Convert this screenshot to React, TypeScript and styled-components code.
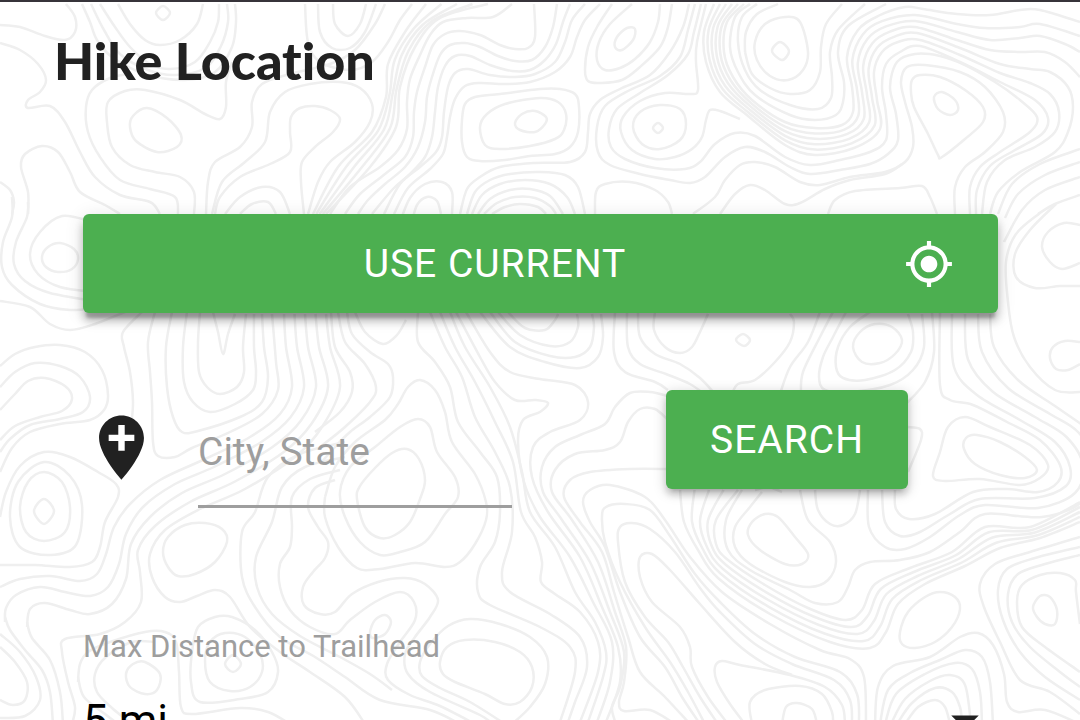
import React from "react";
import styled, { createGlobalStyle } from "styled-components";
import { MdAddLocation, MdGpsFixed } from "react-icons/md";

/* ---------- topographic backdrop ---------- */

type Point = [number, number];

const parse = (line: string): Point[] =>
  line.split(" ").map((pair) => pair.split(",").map(Number) as Point);

// Runs a smooth curve through the points of a contour.
const smooth = (pts: Point[], closed: boolean): string => {
  const n = pts.length;
  const at = (i: number): Point =>
    closed ? pts[(i + n) % n] : pts[Math.max(0, Math.min(n - 1, i))];
  let d = `M${pts[0][0]} ${pts[0][1]}`;
  const segments = closed ? n : n - 1;
  for (let i = 0; i < segments; i++) {
    const [p0, p1, p2, p3] = [at(i - 1), at(i), at(i + 1), at(i + 2)];
    const c1 = [p1[0] + (p2[0] - p0[0]) / 6, p1[1] + (p2[1] - p0[1]) / 6];
    const c2 = [p2[0] - (p3[0] - p1[0]) / 6, p2[1] - (p3[1] - p1[1]) / 6];
    d += `C${[...c1, ...c2, ...p2].map((v) => v.toFixed(1)).join(" ")}`;
  }
  return closed ? d + "Z" : d;
};

// Evenly spaced contours between two that have the same number of points,
// each one carried on by its own tail where tails are given.
const band = (from: string, to: string, count: number, tails: string[] = []): string[] => {
  const a = parse(from);
  const b = parse(to);
  return Array.from({ length: count }, (_, k) => {
    const t = k / (count - 1);
    const pts = a.map(
      (p, i) => [p[0] + (b[i][0] - p[0]) * t, p[1] + (b[i][1] - p[1]) * t] as Point
    );
    return smooth(tails[k] ? [...pts, ...parse(tails[k])] : pts, false);
  });
};

const OPEN = [
  "0,23 20,25 45,34 65,38 75,30 75,15 66,2",
  "0,41 20,48 38,62 46,78 40,90 28,98 28,106 50,104 65,120 80,150 95,175 120,193 150,200 160,212",
  "28,212 28,190 21,165 25,152 42,144 58,150 70,170 80,190 105,203 120,212",
  "82,2 90,20 97,38 112,55 145,72 185,78 215,70 232,45 236,20 235,2",
  "100,2 115,25 130,45 150,62 170,67 195,60 210,40 218,20 219,2",
  "91,2 104,28 120,52 148,68 175,73 205,66 221,44 228,20 227,2",
  "118,2 130,22 145,38 160,43 180,38 197,22 203,2",
  "178,212 175,195 150,187 120,178 100,155 88,130 86,105 92,88 110,76 130,72",
  "194,212 194,190 180,175 155,170 130,163 112,145 107,120 108,100 125,89 145,88 180,98 205,112 220,117 226,105 226,80 232,60",
  "206,212 208,180 215,160 240,145 252,125 252,100 262,82 290,72 330,62 355,48 375,22 385,2",
  "212,212 222,180 245,160 265,140 270,110 285,90 310,82 340,80 360,86 372,102 370,120 355,140 330,160 318,180 308,212",
  "304,212 301,180 302,160 315,145 333,130 340,117 330,108 315,104 300,106 291,115 290,130 290,150 270,162 240,175 220,195 215,212",
  "225,212 240,195 262,185 280,190 290,212",
  "240,212 252,202 268,200 276,212",
  "305,2 308,40 320,60 350,68 372,60 388,40 400,18 412,2",
  "318,2 320,30 332,46 350,46 365,30 376,2",
  "333,2 335,22 348,34 360,22 366,2",
  "512,2 493,15 467,16 443,20 430,33 420,53 410,77 407,100 407,127 398,148 380,165 350,185 330,212",
  "534,2 535,35 528,46 515,47 500,43 480,33 460,29 445,32 433,43 425,65 417,90 414,110 413,135 405,155 385,172 360,192 345,212",
  "557,2 553,25 545,45 532,58 515,59 498,54 480,45 465,41 450,43 440,53 432,75 427,95 425,120 418,145 405,165 385,182 368,198 358,212",
  "570,2 563,20 556,42 545,58 530,68 512,69 490,63 470,54 455,54 445,64 438,85 435,110 432,135 425,155 410,172 393,187 372,212",
  "585,2 572,18 565,40 555,60 535,72 515,75 490,73 468,67 455,71 448,85 444,110 442,135 436,150 420,165 400,182 384,212",
  "600,2 585,18 577,35 570,55 555,70 530,80 505,82 480,81 465,84 455,97 450,115 447,135 443,152 430,167 408,186 394,212",
  "460,212 467,187 480,175 500,165 535,161 570,160 585,150 588,130 590,112 600,98 620,87 650,73 670,50 683,25 689,2",
  "467,212 475,190 490,178 510,172 540,170 565,173 578,185 585,212",
  "472,212 482,193 500,182 525,178 550,182 567,195 575,212",
  "478,212 490,197 510,188 530,187 550,194 563,212",
  "484,212 497,201 515,195 535,196 550,204 556,212",
  "492,212 505,205 520,202 538,205 546,212",
  "400,220 410,196 425,182 442,180 452,190 452,212",
  "412,220 417,203 427,195 437,199 441,212",
  "660,2 658,20 650,40 635,57 620,66 605,68 597,58 599,40 610,22 632,2",
  "672,2 668,25 660,45 640,65 622,78 600,81 588,79 585,68 588,45 597,25 612,2",
  "695,2 688,28 680,55 660,74 630,88 605,104 597,125 598,150 610,163 640,172 670,178 690,181 705,175 725,155 745,145 765,150 790,165 810,172 840,168 870,162 888,152 898,138 896,112 890,85 897,60 915,52 940,54 965,63 995,80 1020,98 1037,115 1030,130 1000,150 980,165 970,185 970,212",
  "701,2 694,30 688,52 668,73 640,91 617,107 609,127 611,145 625,157 655,166 685,167 700,160 715,142 735,131 755,134 785,155 810,163 840,158 870,150 886,138 886,112 882,85 886,62 900,50 920,44 960,60 1000,80 1035,98 1048,116 1042,132 1015,148 990,164 977,188 976,212",
  "706,2 697,40 696,60 698,88 690,92 665,91 640,99 623,115 621,130 632,148 655,157 675,155 692,147 702,135 706,118 710,108 720,109 740,117",
  "595,212 596,190 605,182 630,180 655,188 668,200 672,212",
  "693,212 715,195 725,178 740,163 755,160 775,165 800,180 820,183 850,175 885,170 905,160 913,145 912,125 905,100 901,80 907,65 925,63 960,70 985,85 1003,110 1003,130 985,150 965,165 955,185 955,212",
  "720,212 735,192 750,183 765,188 785,202 800,201 825,187 850,178 885,172 902,162",
  "745,50 752,72 770,86 790,92 810,88 820,70 821,45 826,22 842,2",
  "745,50 746,30 757,12 778,2",
  "757,2 742,15 738,40 745,68 760,88 790,103 818,107 831,96 832,75 830,50 838,28 865,2",
  "750,2 735,15 730,45 738,70 755,93 790,113 815,118 836,113 843,100 844,80 838,50 848,24 886,2",
  "828,212 835,198 855,189 900,186 922,184 930,195 937,212",
  "1080,147 1040,162 1012,182 998,212",
  "1080,160 1045,173 1018,192 1005,216",
  "1080,175 1045,188 1022,208 1004,240",
  "1080,193 1055,202 1038,212",
  // either side of the first button
  "12,195 12,215 3,240 2,265 12,283 40,302 70,308 95,306",
  "28,200 27,215 16,240 14,262 25,279 50,291 95,299",
  "90,219 62,214 40,230 30,252 38,272 60,285 95,290",
  "0,180 10,188 14,200 12,212",
  "0,299 30,305 50,322 70,328 95,322 125,310",
  "1056,202 1030,228 1015,252 1016,275 1035,286 1060,284 1080,284",
  "1040,211 1016,232 1006,260 1008,300 1014,335 1030,365 1055,388 1080,390",
  "1080,223 1064,221 1048,230 1042,245 1050,260 1062,267 1080,261",
  // below the first button
  "0,364 15,352 35,345 60,343 85,350 102,368 108,393 104,408 90,418 60,422 30,430 12,446 0,470",
  "0,385 15,370 35,361 60,364 80,375 90,395 83,410 60,417 30,423 10,437 0,450",
  "0,408 15,392 28,379 45,376 65,384 72,397 62,409 40,415 15,424 0,438",
  "142,310 123,330 124,345 130,370 133,400 131,425",
  "155,310 148,340 150,370 152,400 153,440 158,454 175,455 192,446 230,430 262,412 278,388 276,360 272,312",
  "172,310 166,345 167,385 173,415 182,430 198,429 240,415 262,400 268,375 264,345 262,312",
  "187,310 183,345 184,380 193,400 210,410 235,402 253,388 256,370 254,345 254,312",
  "200,310 198,340 199,370 207,385 220,392 237,385 244,370 243,345 246,312",
  "213,310 218,330 223,352 228,332 235,312",
  "355,310 365,330 383,342 397,333 406,318",
  "347,310 352,332 370,350 388,362 393,375 390,395 370,415 350,430 335,445 320,462",
  "338,310 345,340 365,362 376,385 370,400 345,425 320,445",
  "331,310 335,345 350,370 352,390 340,410 315,430",
  "418,310 418,340 435,360 450,385 458,420 480,450 497,475 500,510 495,540 480,565 478,590 490,603 540,625 570,645 575,670 560,720",
  "430,310 445,345 462,375 475,415 495,450 510,485 512,530 502,570 510,590 550,612 580,635 587,665 575,700 568,720",
  "440,310 455,345 475,380 495,420 513,460 521,510 535,535 542,560 541,580 555,592 580,610 598,640 598,670 580,720",
  "450,310 465,345 490,385 510,425 522,470 530,510 555,545 575,590 595,620 606,650 603,675 588,720",
  "456,310 480,355 495,380 515,398 535,398 548,401 540,410 523,418 518,440 524,480 540,515 570,555 593,600 612,640 610,680 597,720",
  "466,310 490,350 510,370 540,377 575,383 588,400 580,418 550,430 533,445 532,475 548,510 580,555 602,605 618,645 620,680 606,720",
  "668,394 650,390 630,391 615,405 605,422 580,433 555,445 542,465 543,490 562,518 590,560 610,610 624,650 620,685 612,705 616,722",
  "668,418 655,407 640,407 628,420 620,440 605,448 575,452 555,468 552,490 572,518 598,560 615,610 626,645 624,680 619,700 624,709 650,708 675,722",
  "668,467 630,467 590,470 570,478 564,495 580,520 602,550 614,590 628,635 640,670 665,695 690,722",
  "480,310 510,345 545,360 580,366 598,355 603,335 601,312",
  "490,310 515,340 550,354 575,355 590,345 594,325 592,312",
  "498,310 520,333 550,344 570,340 578,325 577,312",
  "508,310 525,326 545,328 555,318 558,312",
  "615,310 614,350 625,370 655,380 668,388",
  "627,310 628,345 640,362 666,372 690,382 704,392",
  "638,310 640,335 655,352 680,362 700,376 715,392",
  "655,310 654,328 665,345 680,351 692,345 700,330 708,312",
  "870,310 850,325 838,345 836,365 843,376 865,378 895,368 911,350 913,330 908,312",
  "846,310 833,335 823,355 819,375 825,388 850,390 890,383 913,368 924,345 922,312",
  "833,310 820,335 803,370 801,392",
  "820,310 808,340 790,365 780,392",
  "932,310 934,350 925,380 906,402",
  "732,392 738,382 755,378 775,360 790,340 794,320 790,312",
  "940,310 940,383 950,398 973,403 1007,420 1040,438 1060,463 1058,480 1038,490 1007,487 973,490 935,512 909,517 896,507 895,488",
  "1080,340 1065,339 1053,345 1050,356 1056,367 1068,368 1080,362",
  "908,425 920,427 921,438 908,470",
  // lower half
  "0,563 35,563 70,565 92,560 100,545 105,520 118,495 116,482 98,470 70,455 44,450 20,464 6,490 0,515",
  "5,615 10,628 25,648 42,668 50,690 53,722",
  "27,620 32,636 50,658 60,690 63,722",
  "0,632 20,650 36,675 40,698 25,714 0,716",
  "0,645 15,660 27,680 25,698 13,703 0,698",
  "345,440 300,452 268,475 255,510 242,530 242,575 255,605 280,635 315,655 345,675 380,698 430,708 460,722",
  "345,455 305,465 282,485 272,520 256,555 257,585 272,612 300,634 340,655 370,672 392,688",
  "340,468 310,477 292,495 292,525 290,545 280,562 280,585 290,608 310,625 335,632 350,618 375,600 400,590 414,600 415,618 400,640 387,662 388,678 410,693 440,704 475,722",
  "335,478 315,486 308,505 318,525 328,540 325,556 313,570 303,585 304,603 320,612 335,610 352,592 378,580 405,576 425,582 438,598 430,615 415,635 405,652 408,672 430,690 480,713 492,722",
  "325,495 325,515 338,545 357,566 380,567 415,561 445,565 460,560 475,542 486,518 486,500 475,472 452,440 445,410 435,388 420,378 408,385 398,402 385,418 355,440 335,465 325,495",
  "78,680 80,662 88,650 110,640 145,630 165,630 176,640 179,670 181,705 192,712 240,706 268,710 290,722",
  "78,675 84,695 105,712 118,722",
  "132,722 112,706 97,690 95,672 106,655 132,640 155,640",
  "512,722 530,705 545,682 547,655 530,635 500,622 470,617 448,624 430,642 420,660 422,674 440,686 470,700 505,722",
  "866,722 864,675 850,657 820,648 770,622 722,590 690,555 665,518 645,495 610,483 590,488 583,500 590,520 605,545 620,590 640,635 665,665 682,695 700,722",
  "859,722 857,692 840,670 795,655 755,632 720,600 695,572 670,534 650,508 625,502 606,505 602,515 605,540 620,580 645,625 670,660 688,690 705,722",
  "852,722 850,698 834,678 792,662 755,642 720,610 700,586 675,550 650,527 632,521 620,525 618,540 625,580 645,615 668,640 683,665 700,695 718,722",
  "845,722 842,703 825,685 790,673 740,663 722,659 715,665 717,680 730,702 745,722",
  "792,673 765,662 735,640 700,602 670,568 652,552 640,555 640,575 652,600 680,625 690,645 692,665 708,695 728,722",
  "800,488 808,518 830,540 836,560 828,578 810,585 785,580 750,562 735,545 735,525 750,505 762,490",
  "815,488 818,508 830,522 843,523 855,512 860,488",
  "755,488 768,485 782,490",
  "752,722 750,700 765,688 800,684 822,692 832,710 833,722",
  "782,722 786,705 797,701 812,707 817,722",
  "875,722 878,685 893,664 930,655 960,635 978,631 993,643 1004,672 1007,700 1018,710 1045,708 1080,722",
  "880,722 888,688 910,671 940,658 965,648 982,655 990,680 993,722",
  "885,722 896,692 925,672 955,661 972,667 980,690 982,722",
  "891,722 905,697 930,679 950,673 965,683 971,722",
  "897,722 912,701 935,686 952,690 960,705 962,722",
  "905,722 918,705 935,698 945,705 950,722",
  "1080,535 1030,550 995,562 980,582 984,605 1000,640 1020,678 1050,690 1080,712",
  "1080,545 1035,556 1007,567 998,588 1003,618 1020,650 1045,675 1080,698",
  "1080,553 1045,562 1018,572 1008,592 1012,620 1030,645 1060,670 1080,685",
  "1080,622 1076,590 1075,578 1060,571 1040,573 1022,583 1017,600 1022,625 1045,645 1080,670",
];

const CLOSED = [
  "163,4 170,11 163,18 156,11",
  "147,106 133,114 130,125 136,139 157,150 177,145 181,133 167,116",
  "480,125 487,112 505,102 540,96 558,100 566,112 564,128 555,137 530,144 500,147 485,143",
  "462,118 465,102 475,95 500,92 540,87 560,87 575,92 579,105 578,130 570,145 555,152 530,154 505,158 480,159 467,155 462,140",
  "515,121 522,112 535,109 546,115 545,122 535,130 520,128",
  "615,45 617,35 627,26 635,27 633,38 622,48",
  "633,125 640,110 660,103 680,107 686,122 680,138 660,147 642,142",
  "658,121 663,126 658,131 653,126",
  "780,40 789,49 782,58 772,49",
  "755,40 765,22 785,15 800,20 808,50 803,68 788,78 770,74 757,58",
  "912,78 920,73 940,75 965,88 983,105 983,120 965,137 942,155 938,153 928,132 914,105 911,90",
  "934,95 942,90 955,98 958,108 950,113 938,107",
  "60,241 74,247 78,257 72,267 58,270 46,265 42,255 48,245",
  "44,497 54,509 44,522 34,509",
  "44,470 62,480 70,505 65,530 44,539 26,530 20,505 28,480",
  "44,460 70,474 82,503 76,543 50,553 20,545 10,515 18,480",
  "163,550 168,535 185,523 205,521 222,527 227,540 215,560 195,572 178,574 168,565",
  "233,653 241,662 233,670 225,662",
  "205,658 210,640 225,631 245,635 260,652 262,670 250,685 230,689 210,680",
  "192,650 198,625 215,615 232,615 255,628 272,650 278,670 268,690 240,697 200,700 191,680",
  "145,660 160,672 157,688 145,692 130,685 126,672 133,662",
  "357,497 360,484 375,466 392,451 407,447 419,457 425,478 420,497 410,520 395,533 380,536 365,525",
  "340,490 350,465 375,445 400,425 418,417 430,425 437,450 455,475 458,495 445,512 425,540 400,550 380,553 360,540 345,515",
  "440,660 447,645 465,638 495,640 520,650 532,665 532,685 520,700 505,702 485,692 455,680 443,672",
  "370,630 375,618 385,613 391,620 385,632 373,636",
  "743,332 750,338 744,344 736,338",
  "853,345 860,330 875,322 892,325 902,338 895,352 880,361 862,360",
  "933,474 940,450 948,425 965,415 990,425 1030,443 1048,463 1040,476 1020,483 980,477 945,479",
  "964,447 966,436 977,433 1000,440 1025,455 1037,468 1025,476 1000,473 975,462",
  "748,533 752,520 765,512 778,515 795,535 808,552 802,562 785,562 760,548",
  "900,630 908,610 925,595 940,590 955,595 960,607 952,625 935,640 915,646 902,642",
  "1033,605 1040,594 1050,595 1057,608 1055,622 1045,622 1037,615",
];

// Contours of the north-east slope, from the edge of the valley outward.
const RIDGE_TAILS = [
  "905,5 923,7 957,12 990,13 1020,8 1040,8 1080,20",
  "915,13 957,22 985,26 1020,25 1040,22 1080,34",
  "915,19 957,30 990,38 1020,36 1040,34 1065,42 1080,50",
  "915,25 957,38 990,48 1020,50 1045,50 1065,60 1080,75",
  "917,31 960,46 1000,62 1030,67 1050,70 1068,85 1073,105 1068,130 1055,150 1020,170 998,190 990,212",
  "920,38 960,53 1000,71 1030,81 1050,92 1059,110 1055,130 1035,145 1005,158 987,180 982,212",
];

// Contours that round the eastern spur and run back west.
const SPUR_TAILS = [
  "1035,496 980,497 950,512 920,530 900,534 885,520 882,488",
  "1038,506 985,503 960,513 930,535 905,547 885,545 869,525 868,488",
  "1042,515 985,512 960,530 930,550 900,558 870,560 855,568 848,585 838,600 815,601 790,588 750,568 728,548 726,518 742,488",
];

// Contours that come down the western slope and turn into the basin.
const BASIN_TAILS = [
  "160,478 130,502 114,525 106,552 97,572 80,579 50,574 20,577 0,585",
  "175,482 143,505 126,532 119,562 108,585 90,594 65,590 40,585 16,593 6,606 5,620",
  "182,491 150,515 131,542 126,577 112,602 90,612 70,608 45,601 30,607 27,625",
  "190,500 155,524 138,548 140,570 141,600 125,620 100,632 65,637 62,650 68,680 75,705 72,722",
  "200,507 165,528 150,552 152,575 165,595 180,600 197,594 215,588 230,595 250,625 280,650 310,670 345,695 365,722",
];

const CONTOURS = [
  ...OPEN.map((line) => smooth(parse(line), false)),
  ...CLOSED.map((line) => smooth(parse(line), true)),
  ...band(
    "426,2 405,30 388,62 386,95 372,130 338,165 313,212",
    "488,2 440,16 415,45 400,85 396,125 370,165 326,212",
    5
  ),
  ...band(
    "744,2 727,20 724,50 733,75 752,98 785,120 815,126 842,123 853,110 852,85 847,55 858,28 878,14",
    "714,2 704,30 706,60 720,90 748,114 785,143 815,153 854,146 880,127 877,98 874,70 882,50 898,40",
    6,
    RIDGE_TAILS
  ),
  ...band(
    "284,312 286,345 292,385 280,412 250,435 205,457",
    "326,312 330,345 340,385 322,425 295,455 245,487",
    5,
    BASIN_TAILS
  ),
  ...band(
    "952,312 954,365 977,393 1020,418 1055,440 1070,465 1066,484",
    "978,312 982,350 1008,386 1050,412 1078,430 1096,462 1084,498",
    3,
    SPUR_TAILS
  ),
  smooth(parse("990,312 994,345 1018,378 1055,404 1084,424"), false),
  ...band(
    "738,488 716,518 716,542 728,558 765,583 808,606 845,618 862,608 875,582 910,566 952,550 985,525 1030,525 1080,500",
    "680,488 684,520 698,548 718,576 770,612 830,640 870,646 886,630 898,602 925,582 965,564 1000,546 1040,536 1080,520",
    5
  ),
];

const Backdrop = styled.svg`
  position: absolute;
  inset: 0;
  z-index: -1;
  width: 100%;
  height: 100%;
  fill: none;
  stroke: #efefef;
  stroke-width: 2.5;
`;

const Topography = () => (
  <Backdrop viewBox="0 0 1080 720" preserveAspectRatio="xMidYMin slice" aria-hidden="true">
    {CONTOURS.map((d, i) => (
      <path key={i} d={d} />
    ))}
  </Backdrop>
);

/* ---------- page ---------- */

const GlobalStyle = createGlobalStyle`
  *, *::before, *::after { box-sizing: border-box; }
  body {
    margin: 0;
    background: #fff;
    color: #212121;
    font-family: Roboto, "Liberation Sans", sans-serif;
  }
`;

const Page = styled.main`
  position: relative;
  isolation: isolate;
  height: 100vh;
  overflow: hidden auto;
  scrollbar-width: none;
  border-top: 2px solid #37343a;
`;

const Title = styled.h1`
  margin: 0;
  padding: 26px 54px 0;
  font-family: Lato, "Liberation Sans", sans-serif;
  font-size: 52px;
  font-weight: 900;
  font-variant-ligatures: none;
  line-height: 64px;
`;

const Form = styled.form`
  padding: 122px 82px 24px 83px;
`;

const Button = styled.button<{ $wide?: boolean }>`
  display: flex;
  align-items: center;
  gap: 41px;
  width: ${({ $wide }) => ($wide ? "100%" : "auto")};
  height: 99px;
  padding: 0 44px;
  border: 0;
  border-radius: 6px;
  background: #4caf50;
  color: #fff;
  font-family: inherit;
  font-size: 39px;
  letter-spacing: 1px;
  text-transform: uppercase;
  cursor: pointer;
  box-shadow: ${({ $wide }) =>
    $wide
      ? "0 8px 8px rgba(0, 0, 0, 0.24), 0 3px 19px rgba(0, 0, 0, 0.12), 0 8px 3px -3px rgba(0, 0, 0, 0.2)"
      : "0 6px 6px rgba(0, 0, 0, 0.14), 0 8px 3px -6px rgba(0, 0, 0, 0.12), 0 3px 14px rgba(0, 0, 0, 0.2)"};
`;

const ButtonText = styled.span`
  flex: 1;
  text-align: center;
`;

const SearchRow = styled.div`
  display: grid;
  grid-template-columns: 115px minmax(0, 1fr) 332px;
  margin-top: 77px;
`;

const PinLabel = styled.label`
  padding-top: 19px;
  line-height: 0;
`;

const PlaceInput = styled.input`
  width: calc(100% - 154px);
  height: 118px;
  padding: 8px 0 0;
  border: 0;
  border-bottom: 3px solid #9e9e9e;
  background: transparent;
  color: #212121;
  font-family: inherit;
  font-size: 39px;
  outline: 0;

  &::placeholder {
    color: #9e9e9e;
    opacity: 1;
  }
`;

const SearchCell = styled.div`
  display: flex;
  align-items: flex-start;
`;

const FieldLabel = styled.label`
  display: block;
  margin-top: 121px;
  color: #9e9e9e;
  font-size: 31px;
  line-height: 36px;
`;

const SelectBox = styled.div`
  display: grid;
  align-items: center;
  margin-top: 16px;
  border-bottom: 3px solid #9e9e9e;

  > * {
    grid-area: 1 / 1;
  }
`;

const Select = styled.select`
  width: 100%;
  height: 80px;
  padding: 0;
  border: 0;
  appearance: none;
  background: transparent;
  color: #000;
  font-family: inherit;
  font-size: 44px;
`;

const Caret = styled.svg`
  justify-self: end;
  width: 66px;
  height: 66px;
  fill: #212121;
  pointer-events: none;
`;

export default function App() {
  return (
    <>
      <GlobalStyle />
      <Page>
        <Topography />
        <Title>Hike Location</Title>
        <Form onSubmit={(event) => event.preventDefault()}>
          <Button type="button" $wide>
            <ButtonText>Use current</ButtonText>
            <MdGpsFixed size={50} aria-hidden="true" />
          </Button>
          <SearchRow>
            <PinLabel htmlFor="place" aria-label="City, State">
              <MdAddLocation size={77} aria-hidden="true" />
            </PinLabel>
            <PlaceInput id="place" type="text" placeholder="City, State" />
            <SearchCell>
              <Button type="submit">Search</Button>
            </SearchCell>
          </SearchRow>
          <FieldLabel htmlFor="distance">Max Distance to Trailhead</FieldLabel>
          <SelectBox>
            <Select id="distance" defaultValue="5">
              <option value="5">5 mi</option>
              <option value="10">10 mi</option>
              <option value="25">25 mi</option>
              <option value="50">50 mi</option>
            </Select>
            <Caret viewBox="0 0 24 24" aria-hidden="true">
              <path d="M7 10l5 5 5-5z" />
            </Caret>
          </SelectBox>
        </Form>
      </Page>
    </>
  );
}
